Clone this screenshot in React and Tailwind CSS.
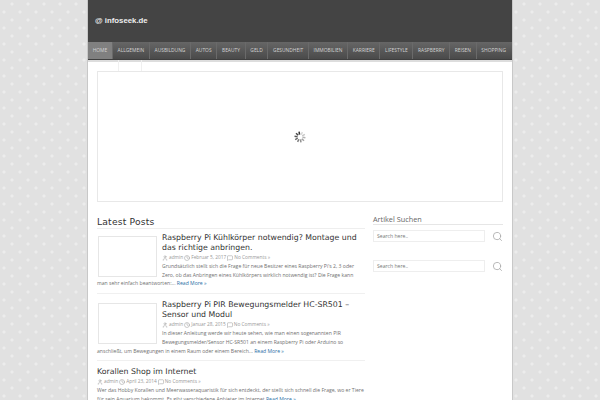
import { User, Clock, MessageSquare, Search } from "lucide-react";

const NAV_ITEMS = ["Home", "Allgemein", "Ausbildung", "Autos", "Beauty", "Geld", "Gesundheit", "Immobilien", "Karriere", "Lifestyle", "Raspberry", "Reisen", "Shopping"];

const POSTS = [
  {
    title: "Raspberry Pi Kühlkörper notwendig? Montage und das richtige anbringen.",
    date: "Februar 5, 2017",
    text: "Grundsätzlich stellt sich die Frage für neue Besitzer eines Raspberry Pi's 2, 3 oder Zero, ob das Anbringen eines Kühlkörpers wirklich notwendig ist? Die Frage kann man sehr einfach beantworten:...",
    thumb: true,
  },
  {
    title: "Raspberry Pi PIR Bewegungsmelder HC-SR501 – Sensor und Modul",
    date: "Januar 28, 2015",
    text: "In dieser Anleitung werde wir heute sehen, wie man einen sogenannten PIR Bewegungsmelder/Sensor HC-SR501 an einem Raspberry Pi oder Arduino so anschließt, um Bewegungen in einem Raum oder einem Bereich...",
    thumb: true,
  },
  {
    title: "Korallen Shop im Internet",
    date: "April 23, 2014",
    text: "Wer das Hobby Korallen und Meerwasseraquaristik für sich entdeckt, der stellt sich schnell die Frage, wo er Tiere für sein Aquarium bekommt. Es gibt verschiedene Anbieter im Internet",
    thumb: false,
  },
];

function Spinner() {
  const bars = [0, 1, 2, 3, 4, 5, 6, 7, 8, 9];
  return (
    <svg width="12" height="12" viewBox="0 0 24 24">
      {bars.map((i) => (
        <rect key={i} x="10.5" y="1" width="3" height="6" fill="#333" opacity={1 - i * 0.09} transform={`rotate(${i * -36 - 10} 12 12)`} />
      ))}
    </svg>
  );
}

function SearchBox() {
  return (
    <div className="flex items-center gap-[7px]">
      <div className="w-[113px] h-[12px] border border-[#eeeeee] bg-white pl-[3px] text-[5.1px] leading-[10px] text-[#777]">Search here..</div>
      <Search size={11} strokeWidth={1.8} className="text-[#aaaaaa]" />
    </div>
  );
}

function Post({ post }) {
  return (
    <div className="pb-[5px] mb-[6px] border-b border-[#f0f0f0] last:border-0">
      {post.thumb && <div className="float-left w-[59px] h-[41px] ml-px mr-[5px] mt-[3px] border border-[#e6e6e6] bg-white" />}
      <h2 className="font-['DejaVu_Sans',sans-serif] text-[7.8px] leading-[10px] text-[#333] font-normal">{post.title}</h2>
      <div className="flex items-center h-[9px] text-[4.8px] text-[#999] gap-[1px]">
        <User size={6} />
        <span>admin</span>
        <Clock size={6} />
        <span>{post.date}</span>
        <MessageSquare size={6} />
        <span>No Comments »</span>
      </div>
      <p className="text-[5.1px] leading-[8.7px] text-[#707070]">
        {post.text} <span className="text-[#2a6ea5]">Read More »</span>
      </p>
    </div>
  );
}

export default function App() {
  return (
    <div className="h-[400px] overflow-hidden bg-[#e1e1e1] bg-[radial-gradient(circle,#ececec_1px,transparent_2px),radial-gradient(circle,#ececec_1px,transparent_2px)] bg-[length:16px_16px] bg-[position:4px_-4px,-4px_4px] font-['Open_Sans',sans-serif]">
      <div className="w-[424px] h-full ml-[88px] bg-white shadow-[0_0_0_1px_#c8c8c8]">
        <header className="h-[42px] bg-[#444444] flex items-center pl-[7px]">
          <span className="font-['Liberation_Sans',sans-serif] font-bold text-[7.8px] text-[#eeeeee]">@ infoseek.de</span>
        </header>

        <nav className="h-[18px] flex bg-gradient-to-b from-[#666666] to-[#4a4a4a] border-b border-[#3f3f3f] shadow-[0_2px_0_#dddddd]">
          {NAV_ITEMS.map((item, i) => (
            <div
              key={item}
              className={`flex items-center px-[4.7px] text-[4.9px] uppercase whitespace-nowrap text-[#d4d4d4] border-r border-[#6a6a6a] last:border-0 ${i === 0 ? "bg-[#808080]" : ""}`}
            >
              {item}
            </div>
          ))}
        </nav>

        <div className="h-[11px] ml-[30px] flex">
          <div className="w-[24px] border-x border-[#f0f0f0]" />
        </div>

        <div className="mx-[9px] h-[131px] border border-[#e8e8e8] flex items-center justify-center">
          <Spinner />
        </div>

        <div className="flex mx-[9px] mt-[13px] gap-[8px]">
          <main className="w-[268px]">
            <h1 className="font-['DejaVu_Sans',sans-serif] text-[9.2px] leading-[13px] tracking-[0.02em] text-[#333] border-b border-[#eeeeee] mb-[4px]">Latest Posts</h1>
            {POSTS.map((post) => (
              <Post key={post.title} post={post} />
            ))}
          </main>

          <aside className="w-[130px]">
            <h3 className="text-[7.3px] leading-[9px] text-[#666] border-b border-[#e6e6e6] mb-[5px]">Artikel Suchen</h3>
            <SearchBox />
            <div className="h-[18px]" />
            <SearchBox />
          </aside>
        </div>
      </div>
    </div>
  );
}
